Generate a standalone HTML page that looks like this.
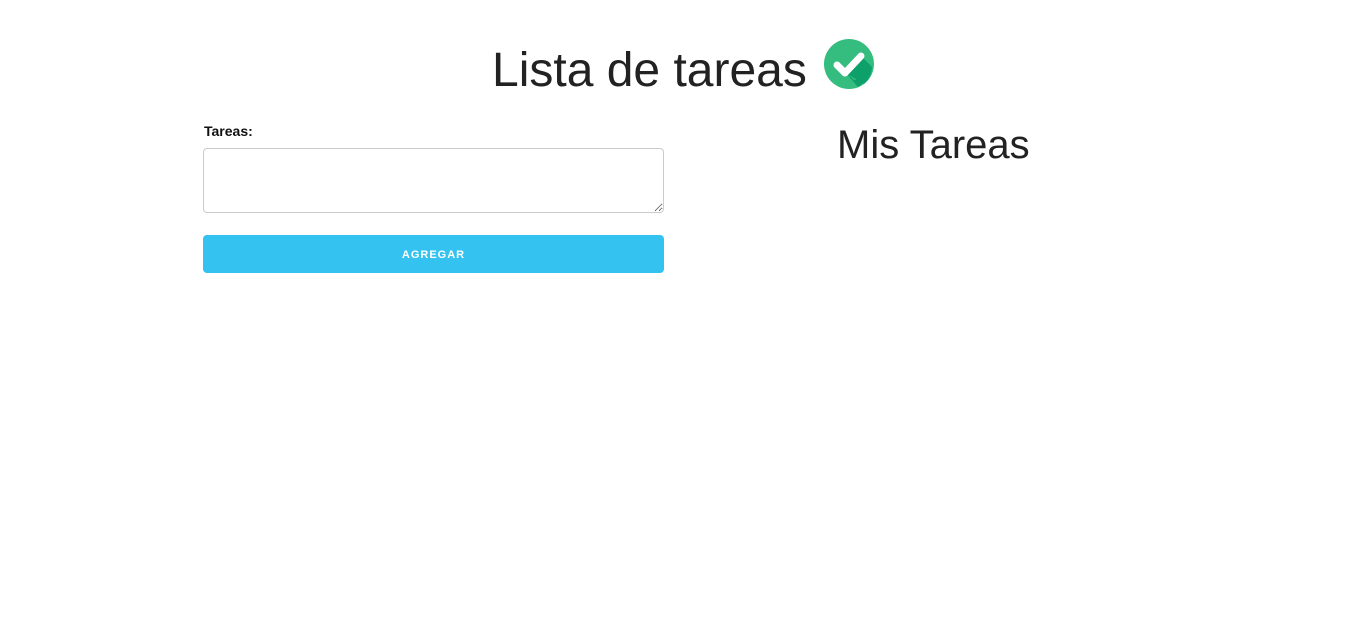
<!DOCTYPE html>
<html><head><meta charset="utf-8"><style>
body{margin:0;background:#fff;font-family:"Liberation Sans",sans-serif;color:#222;width:1366px;height:624px;position:relative;overflow:hidden}
h1{position:absolute;left:492px;top:41px;margin:0;font-weight:normal;font-size:48px;line-height:60px;white-space:nowrap}
svg.ic{position:absolute;left:824px;top:39px}
h2{position:absolute;left:837px;top:121px;margin:0;font-weight:normal;font-size:40px;line-height:48px;white-space:nowrap}
label{position:absolute;left:204px;top:123px;font-weight:bold;font-size:14px;color:#111}
textarea{position:absolute;left:203px;top:148px;width:461px;height:65px;box-sizing:border-box;border:1px solid #ccc;border-radius:4px;margin:0;padding:4px}
.btn{position:absolute;left:203px;top:235px;width:461px;height:38px;background:#34c3f0;border-radius:4px;color:#fff;font-weight:bold;font-size:11px;letter-spacing:1px;text-align:center;line-height:41px}
</style></head><body>
<h1>Lista de tareas</h1>
<svg class="ic" width="50" height="50" viewBox="0 0 50 50">
<circle cx="25" cy="25" r="25" fill="#34bd7e"/>
<path d="M16 27 L30 41 L43 39 A25 25 0 0 1 34 48 Z M22 34 L38 18 L48 28 A25 25 0 0 1 40 45 Z" fill="#0ea06a"/>
<path d="M13 26 L21 34 L37 17" stroke="#fff" stroke-width="7" fill="none" stroke-linecap="round" stroke-linejoin="round"/>
</svg>
<h2>Mis Tareas</h2>
<label>Tareas:</label>
<textarea></textarea>
<div class="btn">AGREGAR</div>
</body></html>
